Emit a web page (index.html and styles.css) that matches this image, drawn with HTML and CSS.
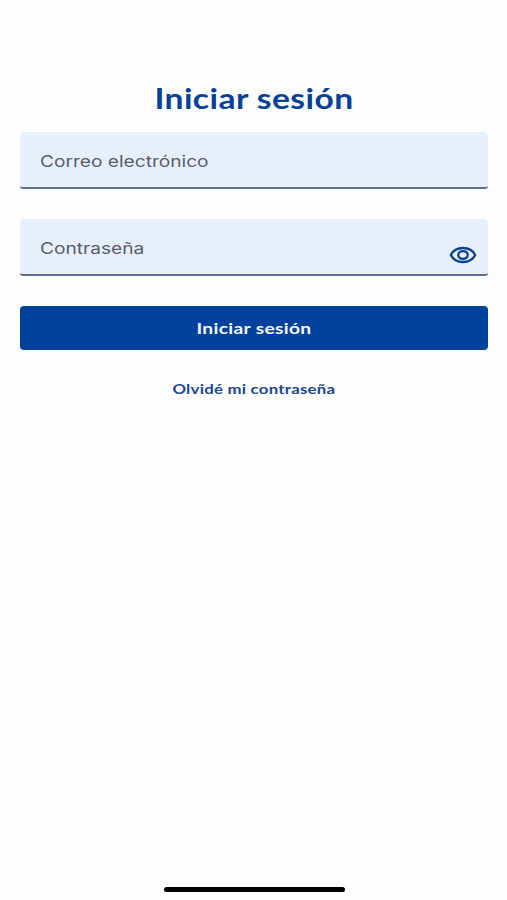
FILE: index.html
```html
<!DOCTYPE html>
<html lang="es">
<head>
<meta charset="utf-8">
<title>Iniciar sesión</title>
<link rel="stylesheet" href="styles.css">
</head>
<body>
<main class="screen">
  <h1 class="title"><span class="wide">Iniciar sesión</span></h1>
  <form class="form">
    <div class="field"><label class="label label-email">Correo electrónico</label></div>
    <div class="field">
      <label class="label label-password">Contraseña</label>
      <svg class="eye" width="28" height="18" viewBox="0 0 28 18" fill="none" stroke="#0b4090" stroke-width="2.3">
        <path d="M1.8 9C4 4.600 8.600 2 14 2s10 2.600 12.200 7C24 13.400 19.400 16 14 16S4 13.400 1.800 9Z" stroke-linejoin="round"/>
        <ellipse cx="14" cy="9" rx="4.700" ry="3.900"/>
      </svg>
    </div>
    <button class="submit" type="button"><span class="wide">Iniciar sesión</span></button>
  </form>
  <a class="forgot"><span class="wide">Olvidé mi contraseña</span></a>
  <div class="home-bar"></div>
</main>
</body>
</html>
```
FILE: styles.css
```css
* { box-sizing: border-box; }
body { margin: 0; background: #fefefe; font-family: Lato, sans-serif; }
.screen { height: 900px; padding: 78px 19px 8px 20px; display: flex; flex-direction: column; }
.wide { display: inline-block; transform: scaleX(1.2); white-space: nowrap; letter-spacing: 0.2px; }
.title { margin: 0; height: 53.500px; line-height: 40px; font-size: 28px; font-weight: 700; color: #064197; text-align: center; }
.title .wide { letter-spacing: 0.35px; }
.form { display: flex; flex-direction: column; }
.field { height: 57px; margin-bottom: 30.300px; padding: 0 11px 0 20px; display: flex; justify-content: space-between; align-items: center; background: #e7effc; border-radius: 5px 5px 3px 3px; border-bottom: 2px solid #587299; }
.label { font-family: Inter, sans-serif; font-size: 16px; line-height: 24px; color: #585e69; white-space: nowrap; transform-origin: left center; transform: scaleX(1.195); margin-top: 4px; }
.eye { margin-top: 18px; }
.submit { height: 43.500px; padding: 0; border: 0; border-radius: 4px; background: #00419b; color: #f4f8ff; font: 700 16px/43px Lato, sans-serif; }
.submit .wide { letter-spacing: 0.28px; }
.forgot { margin-top: 28px; text-align: center; font-size: 14px; line-height: 22px; font-weight: 700; color: #1a468c; }
.home-bar { width: 181px; height: 5px; margin: auto auto 0; border-radius: 3px; background: #000; }
```
